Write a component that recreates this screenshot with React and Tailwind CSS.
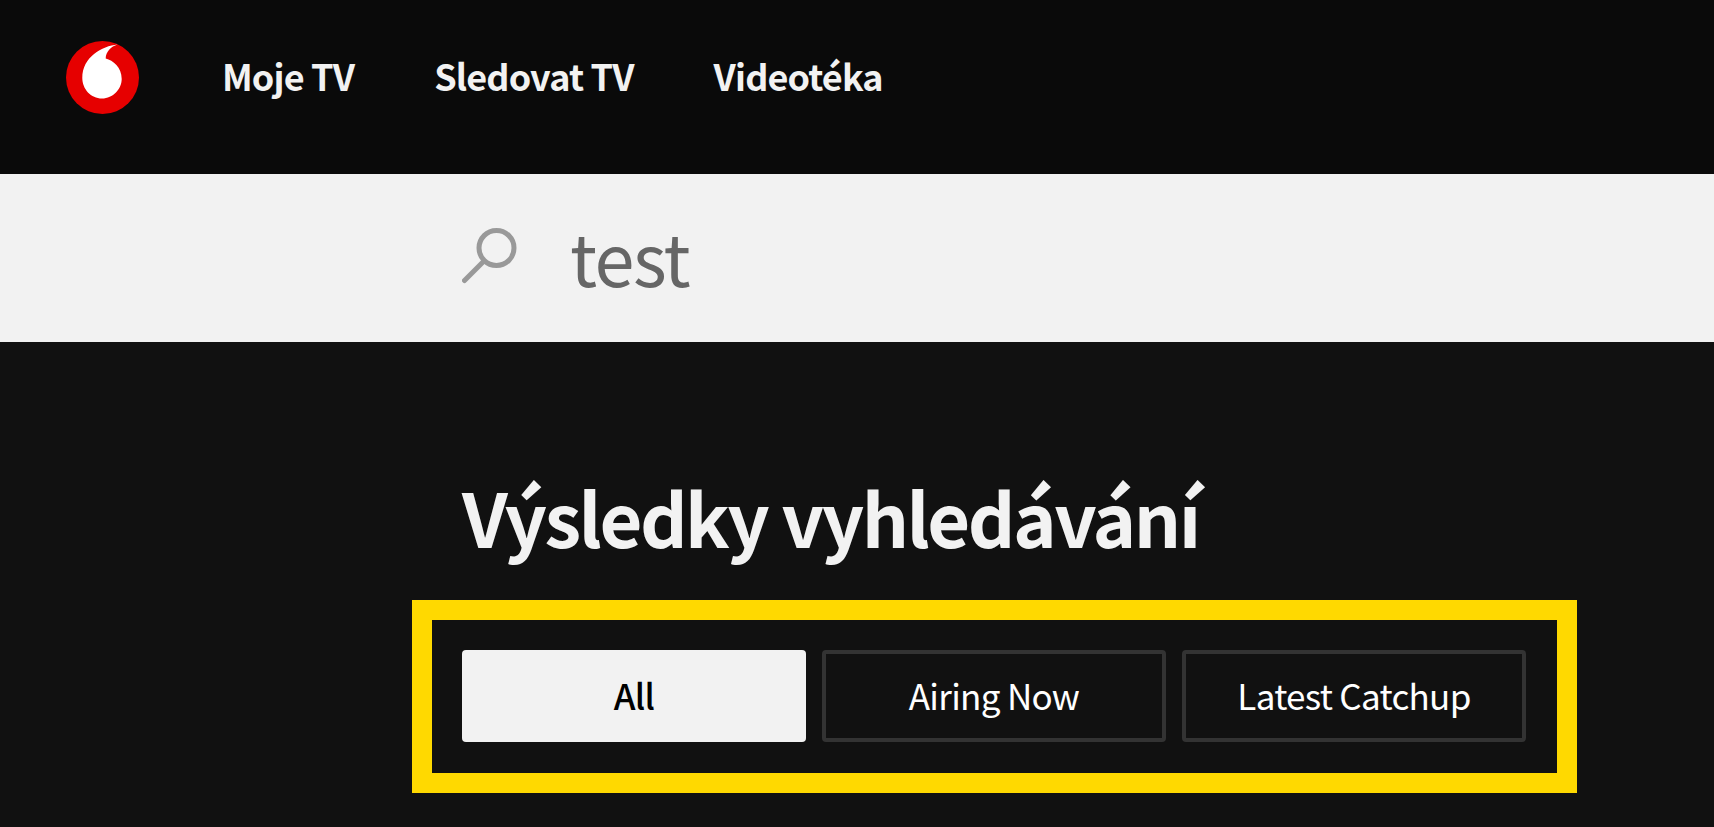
import React from "react";

const FONT = "font-['Noto_Sans_CJK_SC','Noto_Sans',sans-serif]";

const NAV = ["Moje TV", "Sledovat TV", "Videotéka"];

const TABS = [
  { id: "all", label: "All", active: true },
  { id: "airing", label: "Airing Now" },
  { id: "catchup", label: "Latest Catchup" },
];

function Logo() {
  return (
    <svg width="73" height="73" viewBox="0 0 73 73" className="shrink-0">
      <circle cx="36.5" cy="36.5" r="36.5" fill="#e60000" />
      <path
        d="M51.5 3.5C36 5 16.3 16 16.3 37C16.3 48 25 57.5 36 57.5C47 57.5 55.7 48 55.7 38C55.7 26 47 19.5 39.7 17.5C39.7 11 45 5.5 51.5 3.5Z"
        fill="#fff"
      />
    </svg>
  );
}

function SearchIcon() {
  return (
    <svg width="56" height="56" viewBox="0 0 56 56" fill="none" stroke="#999" strokeWidth="5" strokeLinecap="round" className="mb-[5px]">
      <circle cx="34.5" cy="20" r="17.5" />
      <path d="M21.5 33.5L2.5 52.5" />
    </svg>
  );
}

export default function App() {
  return (
    <div className={`${FONT} h-screen overflow-hidden bg-[#111111]`}>
      {/* Top nav */}
      <header className="flex h-[174px] items-center bg-[#0a0a0a] pb-[20px] pl-[66px]">
        <Logo />
        <nav className="mb-[4px] ml-[83px] flex gap-[80px] text-[36px] font-bold tracking-[-0.85px] text-[#f2f2f2]">
          {NAV.map((item) => (
            <a key={item}>{item}</a>
          ))}
        </nav>
      </header>

      {/* Search */}
      <div className="flex h-[168px] items-center bg-[#f2f2f2] pl-[462px]">
        <SearchIcon />
        <span className="mb-[4px] ml-[52px] text-[72px] leading-none tracking-[-1.5px] text-[#666666]">test</span>
      </div>

      {/* Results */}
      <main className="pl-[412px]">
        <h1 className="mt-[125px] pl-[50px] text-[74px] leading-[98px] font-bold tracking-[-2.5px] text-[#f2f2f2]">
          Výsledky vyhledávání
        </h1>
        <div className="mt-[35px] flex w-[1165px] gap-[16px] border-[20px] border-[#ffd900] pt-[30px] pr-[31px] pb-[31px] pl-[30px]">
          {TABS.map((tab) => (
            <button
              key={tab.id}
              className={
                tab.active
                  ? "flex h-[92px] w-[344px] items-center justify-center rounded-[4px] bg-[#f2f2f2] pb-[2px] text-[35px] font-medium tracking-[-0.7px] text-black"
                  : "flex h-[92px] w-[344px] items-center justify-center rounded-[4px] border-4 border-[#333333] pb-[2px] text-[35px] tracking-[-0.7px] text-white"
              }
            >
              {tab.label}
            </button>
          ))}
        </div>
      </main>
    </div>
  );
}
